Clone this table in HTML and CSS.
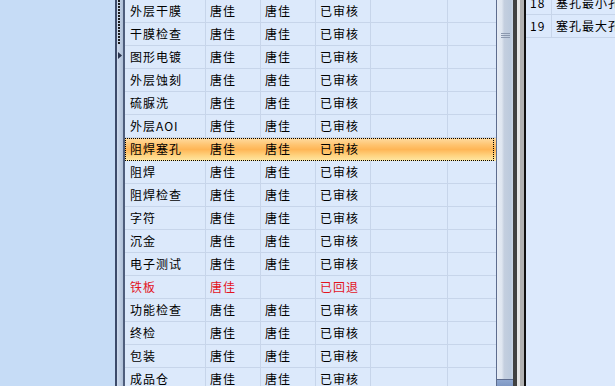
FILE: index.html
```html
<!DOCTYPE html>
<html lang="zh-CN">
<head>
    <meta charset="UTF-8">
    <title>工序审核</title>
    <link rel="stylesheet" href="styles.css">
</head>
<body>
    <div class="screen">
        <div class="side"></div>

        <!-- 行指示列 -->
        <div class="row-header">
            <div class="rh-cell"><span class="focus-dots"></span></div>
            <div class="rh-cell"></div>
            <div class="rh-cell current">
                <svg width="4" height="7" viewBox="0 0 4 7"><path d="M0 0 L4 3.5 L0 7 Z" fill="#2b3550"/></svg>
            </div>
        </div>

        <!-- 工序列表 -->
        <div class="grid">
            <div class="row"><div class="cell">外层干膜</div><div class="cell">唐佳</div><div class="cell">唐佳</div><div class="cell">已审核</div><div class="cell"></div><div class="cell"></div></div>
            <div class="row"><div class="cell">干膜检查</div><div class="cell">唐佳</div><div class="cell">唐佳</div><div class="cell">已审核</div><div class="cell"></div><div class="cell"></div></div>
            <div class="row"><div class="cell">图形电镀</div><div class="cell">唐佳</div><div class="cell">唐佳</div><div class="cell">已审核</div><div class="cell"></div><div class="cell"></div></div>
            <div class="row"><div class="cell">外层蚀刻</div><div class="cell">唐佳</div><div class="cell">唐佳</div><div class="cell">已审核</div><div class="cell"></div><div class="cell"></div></div>
            <div class="row"><div class="cell">硫脲洗</div><div class="cell">唐佳</div><div class="cell">唐佳</div><div class="cell">已审核</div><div class="cell"></div><div class="cell"></div></div>
            <div class="row"><div class="cell">外层AOI</div><div class="cell">唐佳</div><div class="cell">唐佳</div><div class="cell">已审核</div><div class="cell"></div><div class="cell"></div></div>
            <div class="row selected"><div class="cell">阻焊塞孔</div><div class="cell">唐佳</div><div class="cell">唐佳</div><div class="cell">已审核</div><div class="cell"></div><div class="cell"></div></div>
            <div class="row"><div class="cell">阻焊</div><div class="cell">唐佳</div><div class="cell">唐佳</div><div class="cell">已审核</div><div class="cell"></div><div class="cell"></div></div>
            <div class="row"><div class="cell">阻焊检查</div><div class="cell">唐佳</div><div class="cell">唐佳</div><div class="cell">已审核</div><div class="cell"></div><div class="cell"></div></div>
            <div class="row"><div class="cell">字符</div><div class="cell">唐佳</div><div class="cell">唐佳</div><div class="cell">已审核</div><div class="cell"></div><div class="cell"></div></div>
            <div class="row"><div class="cell">沉金</div><div class="cell">唐佳</div><div class="cell">唐佳</div><div class="cell">已审核</div><div class="cell"></div><div class="cell"></div></div>
            <div class="row"><div class="cell">电子测试</div><div class="cell">唐佳</div><div class="cell">唐佳</div><div class="cell">已审核</div><div class="cell"></div><div class="cell"></div></div>
            <div class="row returned"><div class="cell">铁板</div><div class="cell">唐佳</div><div class="cell"></div><div class="cell">已回退</div><div class="cell"></div><div class="cell"></div></div>
            <div class="row"><div class="cell">功能检查</div><div class="cell">唐佳</div><div class="cell">唐佳</div><div class="cell">已审核</div><div class="cell"></div><div class="cell"></div></div>
            <div class="row"><div class="cell">终检</div><div class="cell">唐佳</div><div class="cell">唐佳</div><div class="cell">已审核</div><div class="cell"></div><div class="cell"></div></div>
            <div class="row"><div class="cell">包装</div><div class="cell">唐佳</div><div class="cell">唐佳</div><div class="cell">已审核</div><div class="cell"></div><div class="cell"></div></div>
            <div class="row"><div class="cell">成品仓</div><div class="cell">唐佳</div><div class="cell">唐佳</div><div class="cell">已审核</div><div class="cell"></div><div class="cell"></div></div>
        </div>

        <!-- 纵向滚动条 -->
        <div class="vscroll">
            <div class="thumb"><span class="grip"></span></div>
            <div class="arrow-down"></div>
        </div>

        <div class="splitter"></div>

        <!-- 参数明细 -->
        <div class="detail">
            <div class="detail-rows">
                <div class="d-row"><div class="d-cell num">18</div><div class="d-cell">塞孔最小孔径</div></div>
                <div class="d-row"><div class="d-cell num">19</div><div class="d-cell">塞孔最大孔径</div></div>
            </div>
        </div>
    </div>
</body>
</html>
```

FILE: styles.css
```css
* {
    margin: 0;
    padding: 0;
    box-sizing: border-box;
}

body {
    font-family: "Noto Sans CJK SC", "Liberation Sans", sans-serif;
    font-size: 12px;
    color: #000;
    background: #c6dcf6;
    overflow: hidden;
}

.screen {
    display: flex;
    width: 615px;
    height: 386px;
    overflow: hidden;
}

.side {
    width: 115px;
    flex: none;
    background: #c6dcf6;
}

/* 行指示列 */
.row-header {
    width: 10px;
    flex: none;
    border-left: 2px solid #3c4b6a;
    border-right: 2px solid #4e5d7c;
    background: linear-gradient(to right, #cfdcee, #aebfd8);
}

.rh-cell {
    height: 23px;
    display: flex;
    align-items: center;
    justify-content: flex-start;
    padding-left: 1px;
}

.rh-cell.current {
    align-items: flex-start;
    padding-top: 6px;
}

.focus-dots {
    display: block;
    align-self: flex-start;
    width: 2px;
    height: 44px;
    background: repeating-linear-gradient(#1c1c1c 0 2px, transparent 2px 3px);
}

/* 工序列表 */
.grid {
    width: 371px;
    flex: none;
    background: #dce9fb;
}

.row {
    display: grid;
    grid-template-columns: 81px 55px 55px 55px 77px 48px;
    height: 23px;
    position: relative;
}

.cell {
    border-right: 1px solid #c7d5ea;
    border-bottom: 1px solid #c7d5ea;
    padding-left: 4px;
    line-height: 22px;
    letter-spacing: 1px;
    white-space: nowrap;
    overflow: hidden;
}

.cell:first-child {
    padding-left: 5px;
}

.cell:last-child {
    border-right: none;
}

.row.selected {
    background: linear-gradient(#ffdca2 0%, #ffc470 30%, #ffb656 50%, #ffd27e 75%, #ffe9a6 100%);
}

.row.selected .cell {
    border-color: transparent;
}

.row.selected::after {
    content: "";
    position: absolute;
    left: 0;
    top: 0;
    right: 2px;
    bottom: 0;
    border: 1px dotted #000;
    pointer-events: none;
}

.row.returned .cell {
    color: #e3141e;
}

/* 纵向滚动条 */
.vscroll {
    width: 17px;
    flex: none;
    display: flex;
    flex-direction: column;
    border-left: 1px solid #5d6c8e;
}

.thumb {
    height: 379px;
    background: linear-gradient(to right, #e6ecf5 0%, #dfe6f0 30%, #c4cfdf 45%, #bccadd 85%, #c9d4e4 100%);
    padding-top: 33px;
    display: flex;
    justify-content: center;
}

.grip {
    display: block;
    width: 9px;
    height: 6px;
    background: repeating-linear-gradient(#8b98ae 0 1px, transparent 1px 2px);
}

.arrow-down {
    flex: 1;
    border-top: 1px solid #5d6c8e;
    background: linear-gradient(#8ea6cf, #7f98c4);
}

/* 分隔条 */
.splitter {
    width: 13px;
    flex: none;
    background: linear-gradient(to right,
        #404040 0 4px,
        #e6e6e6 4px 7px,
        #b2b2b2 7px 11px,
        #111 11px 13px);
}

/* 参数明细 */
.detail {
    flex: 1;
    background: #dce9fc;
    overflow: hidden;
}

.detail-rows {
    margin-top: -8px;
}

.d-row {
    display: flex;
    height: 23px;
}

.d-cell {
    border-bottom: 1px solid #c7d5ea;
    line-height: 22px;
    padding-left: 4px;
    letter-spacing: 1px;
    white-space: nowrap;
    flex: 1;
}

.d-cell.num {
    flex: none;
    width: 26px;
    border-right: 1px solid #c7d5ea;
}
```
